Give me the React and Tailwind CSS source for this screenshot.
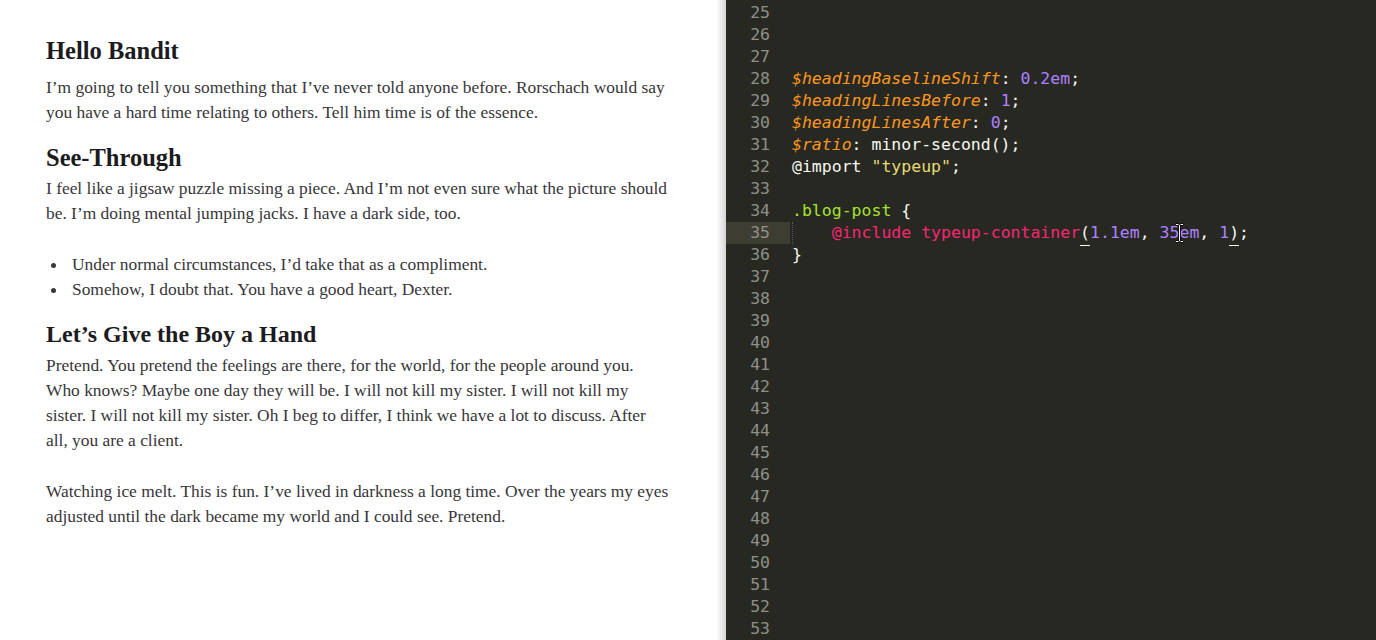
import React from 'react'

const serif = { fontFamily: '"Liberation Serif", "Times New Roman", serif' }
const mono = { fontFamily: '"DejaVu Sans Mono", "Liberation Mono", monospace' }

const C = {
  v: 'text-[#fd971f] italic',
  n: 'text-[#ae81ff]',
  w: 'text-[#f8f8f2]',
  s: 'text-[#e6db74]',
  g: 'text-[#a6e22e]',
  p: 'text-[#f92672]',
}

function Line({ children }) {
  return <div className="h-[25px] leading-[25px] whitespace-nowrap">{children}</div>
}

function Bullet({ children }) {
  return (
    <div className="flex items-center h-[25px] leading-[25px] whitespace-nowrap">
      <span className="w-[5px] h-[5px] rounded-full bg-[#3a3a3a] ml-[5px] mr-[16px] mt-[1px]" />
      {children}
    </div>
  )
}

function Article() {
  return (
    <div className="relative w-[726px] h-full bg-white text-[#38363a] text-[17.4px] pl-[46px]" style={serif}>
      <h1 className="pt-[36px] h-[65px] leading-[30px] text-[24.5px] font-bold text-[#1c1b1d]">Hello Bandit</h1>
      <div className="mt-[10px]">
        <Line>I’m going to tell you something that I’ve never told anyone before. Rorschach would say</Line>
        <Line>you have a hard time relating to others. Tell him time is of the essence.</Line>
      </div>
      <h2 className="mt-[18px] h-[30px] leading-[30px] text-[24.5px] font-bold text-[#1c1b1d]">See-Through</h2>
      <div className="mt-[3px]">
        <Line>I feel like a jigsaw puzzle missing a piece. And I’m not even sure what the picture should</Line>
        <Line>be. I’m doing mental jumping jacks. I have a dark side, too.</Line>
      </div>
      <div className="mt-[26px]">
        <Bullet>Under normal circumstances, I’d take that as a compliment.</Bullet>
        <Bullet>Somehow, I doubt that. You have a good heart, Dexter.</Bullet>
      </div>
      <h2 className="mt-[17px] h-[30px] leading-[30px] text-[24px] font-bold text-[#1c1b1d]">Let’s Give the Boy a Hand</h2>
      <div className="mt-[4px]">
        <Line>Pretend. You pretend the feelings are there, for the world, for the people around you.</Line>
        <Line>Who knows? Maybe one day they will be. I will not kill my sister. I will not kill my</Line>
        <Line>sister. I will not kill my sister. Oh I beg to differ, I think we have a lot to discuss. After</Line>
        <Line>all, you are a client.</Line>
      </div>
      <div className="mt-[26px]">
        <Line>Watching ice melt. This is fun. I’ve lived in darkness a long time. Over the years my eyes</Line>
        <Line>adjusted until the dark became my world and I could see. Pretend.</Line>
      </div>
      <div className="absolute top-0 right-0 w-[9px] h-full bg-gradient-to-r from-white to-[#d4d4d4]" />
    </div>
  )
}

function Bracket({ children }) {
  return (
    <span className="relative">
      {children}
      <span className="absolute left-0 right-0 bottom-[-4px] h-[1px] bg-[#f8f8f2]" />
    </span>
  )
}

const code = {
  28: [[C.v, '$headingBaselineShift'], [C.w, ': '], [C.n, '0.2em'], [C.w, ';']],
  29: [[C.v, '$headingLinesBefore'], [C.w, ': '], [C.n, '1'], [C.w, ';']],
  30: [[C.v, '$headingLinesAfter'], [C.w, ': '], [C.n, '0'], [C.w, ';']],
  31: [[C.v, '$ratio'], [C.w, ': minor-second();']],
  32: [[C.w, '@import '], [C.s, '"typeup"'], [C.w, ';']],
  34: [[C.g, '.blog-post'], [C.w, ' {']],
  36: [[C.w, '}']],
}

function Editor() {
  const rows = []
  for (let i = 25; i <= 53; i++) rows.push(i)
  return (
    <div className="flex-1 h-full bg-[#272822] overflow-hidden pt-[2px] text-[16.5px]" style={mono}>
      {rows.map((n) => (
        <div key={n} className="flex h-[22px] leading-[22px] whitespace-pre">
          <div className={`w-[64px] pr-[20px] text-right text-[#8f908a] ${n === 35 ? 'bg-[#3e3d32]' : ''}`}>{n}</div>
          <div className="relative pl-[2px]">
            {n === 35 ? (
              <>
                <span className="absolute left-[2px] top-0 h-full border-l border-dotted border-[#5a5a52]" />
                <span className={C.w}>{'    '}</span>
                <span className={C.p}>@include typeup-container</span>
                <Bracket><span className={C.w}>(</span></Bracket>
                <span className={C.n}>1.1em</span>
                <span className={C.w}>, </span>
                <span className={C.n}>35em</span>
                <span className={C.w}>, </span>
                <span className={C.n}>1</span>
                <Bracket><span className={C.w}>)</span></Bracket>
                <span className={C.w}>;</span>
                <svg className="absolute left-[385px] top-[1px]" width="9" height="20" viewBox="0 0 9 20">
                  <path d="M1 1.5h2.5M5.5 1.5H8M4.5 2v16M1 18.5h2.5M5.5 18.5H8" stroke="#000" strokeWidth="2.4" />
                  <path d="M1 1.5h2.5M5.5 1.5H8M4.5 2v16M1 18.5h2.5M5.5 18.5H8" stroke="#fff" strokeWidth="1" />
                </svg>
              </>
            ) : (
              (code[n] || []).map(([cls, t], k) => (
                <span key={k} className={cls}>{t}</span>
              ))
            )}
          </div>
        </div>
      ))}
    </div>
  )
}

export default function App() {
  return (
    <div className="flex w-[1376px] h-[640px] overflow-hidden">
      <Article />
      <Editor />
    </div>
  )
}
